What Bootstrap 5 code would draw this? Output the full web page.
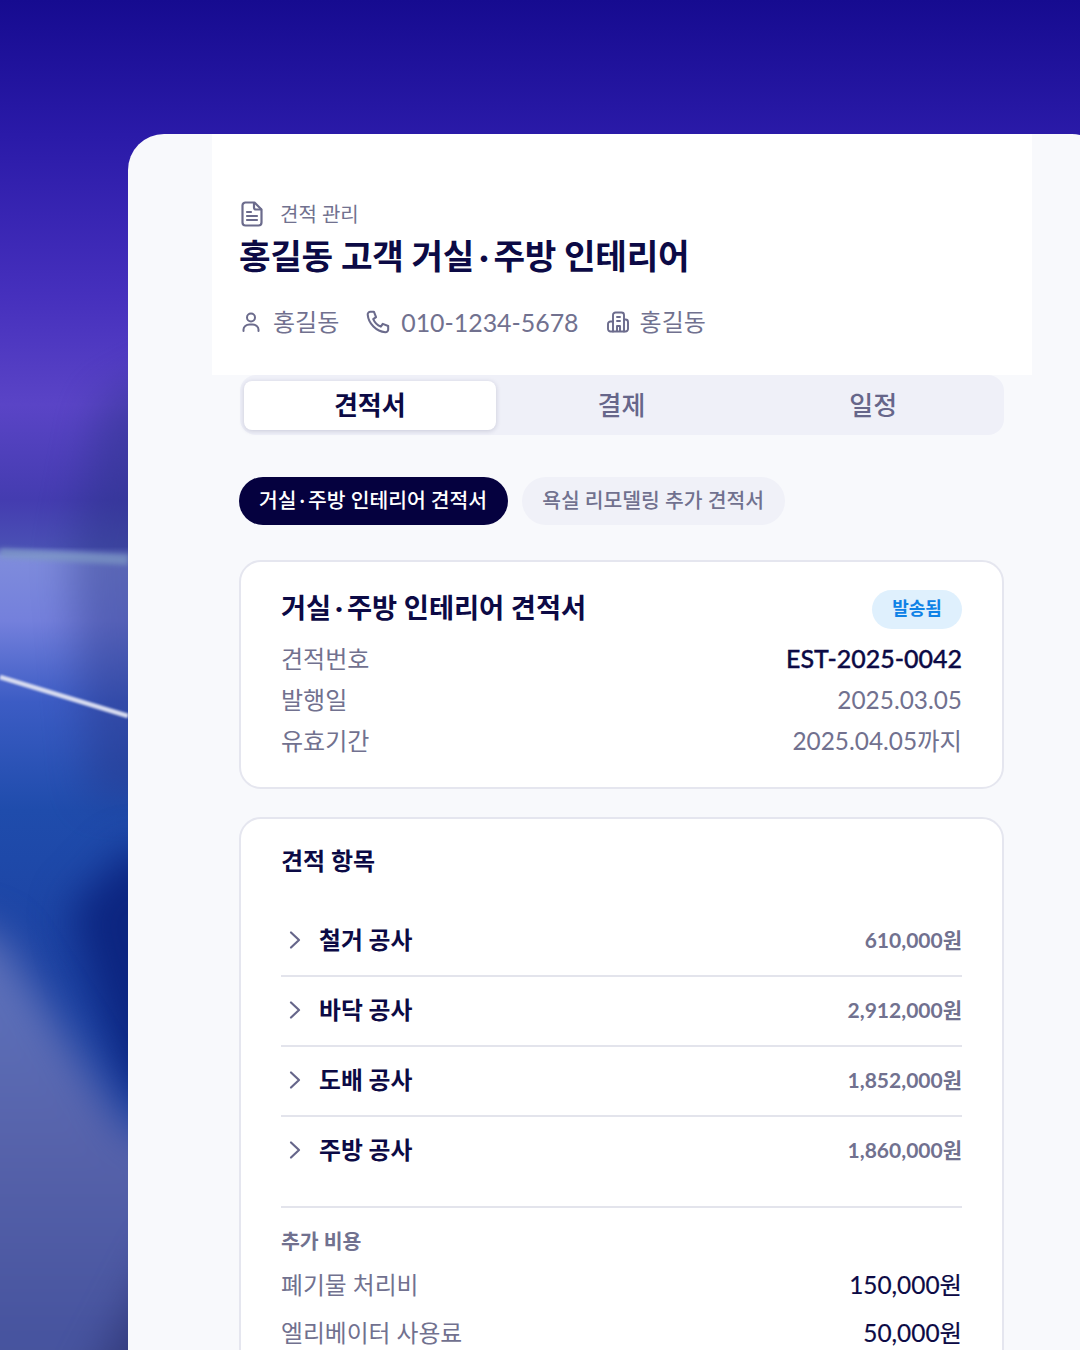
<!DOCTYPE html>
<html lang="ko">
<head>
<meta charset="utf-8">
<title>견적 관리</title>
<link rel="stylesheet" href="https://cdn.jsdelivr.net/npm/bootstrap@5.3.0/dist/css/bootstrap.min.css">
<style>
html,body{margin:0;width:1080px;height:1350px;overflow:hidden}
body{font-family:"Lato","Noto Sans CJK KR",sans-serif;color:#0c0a45;background:#2a1aa8}
.stage{position:relative;width:1080px;height:1350px;overflow:hidden;padding:134px 0 0 128px}
.backdrop{position:absolute;left:0;top:0;width:1080px;height:1350px}
.sheet{position:relative;width:980px;height:1216px;background:#f8f9fc;border-radius:36px 36px 0 0;padding-right:76px;padding-left:84px;overflow:hidden}
.head-panel{background:#fff;height:241px;padding:65px 0 0 27px}
.crumb{font-size:20px;line-height:30px;color:#71718f;gap:17px;padding-left:2px}
.page-title{font-size:34.35px;line-height:44px;font-weight:700;margin:5px 0 0;color:#0c0a45;letter-spacing:-.3px}
.mid{padding:0 .15em}
.meta{margin-top:26px;font-size:24px;line-height:36px;color:#71718f;gap:26px}
.meta span.item{display:flex;align-items:center;gap:10px}
.meta .tel{font-size:24.9px;margin-right:1px}
.body-pad{padding-left:27px;padding-right:28px}
.tabbar{height:60px;background:#eff0f8;border-radius:16px;padding:6px 5px 5px 4px;margin-left:1px}
.tabbtn{flex:1 1 0;border:0;background:transparent;font-size:26px;font-weight:500;color:#66668a;border-radius:8px;line-height:49px;padding:0;text-align:center}
.tabbtn.on{background:#fff;color:#0c0a45;font-weight:600;box-shadow:0 1px 5px rgba(30,30,80,.18)}
.chips{margin-top:42px;gap:14px}
.chip{height:48px;line-height:46px;padding:0 21px 0 20px;border-radius:24px;font-size:20.4px;font-weight:500;background:#f0f1f8;color:#71718f}
.chip.on{background:#05013f;color:#fff}
.panel{background:#fff;border:2px solid #e5e6ef;border-radius:22px;padding:0 40px}
.panel-a{height:229px;margin-top:35px;padding-top:24px}
.panel-b{margin-top:28px;height:600px;padding-top:22px}
.panel-title{font-size:27.3px;line-height:44px;font-weight:700;margin:0;color:#0c0a45}
.sent{height:39px;width:90px;line-height:37px;border-radius:20px;background:#dff0fd;color:#0f82e6;font-size:18px;font-weight:600;text-align:center;margin-top:2px}
.kv-gap{margin-bottom:8px}
.kv{font-size:24px;line-height:41px;color:#71718f}
.kv .num{font-size:24.4px}
.kv .strong{color:#0c0a45;font-weight:500;font-size:25px;-webkit-text-stroke:.35px #0c0a45}
.sec-title{font-size:24px;line-height:40px;font-weight:700;margin:0 0 26px;color:#0c0a45}
.work{height:70px;border-bottom:2px solid #e3e4ec;padding-bottom:2px}
.work.last{border-bottom:0;padding-bottom:4px}
.work .nm{font-size:23.8px;font-weight:700;color:#0c0a45;margin:2px 0 0 17px}
.work .amt{font-size:21px;font-weight:700;color:#71718f}
.chev{margin-left:7px}
.extra{border-top:2px solid #e3e4ec;margin-top:19px;padding-top:14px}
.extra-h{font-size:20.5px;line-height:38px;font-weight:700;color:#71718f;margin-bottom:1px}
.extra-row{font-size:23.8px;line-height:48px;color:#71718f}
.extra-row .val{color:#0c0a45;font-size:24.4px;-webkit-text-stroke:.2px #0c0a45}
</style>
</head>
<body>
<div class="stage">
<svg class="backdrop" viewBox="0 0 1080 1350" aria-hidden="true" color-interpolation-filters="sRGB">
<defs>
<linearGradient id="bg" x1="0" y1="0" x2="0" y2="1">
<stop offset="0" stop-color="#160b90"/>
<stop offset=".1" stop-color="#2a1aa8"/>
<stop offset=".22" stop-color="#4630bd"/>
<stop offset=".3" stop-color="#5a44c6"/>
<stop offset=".37" stop-color="#443cb0"/>
<stop offset=".405" stop-color="#4a50b4"/>
<stop offset=".412" stop-color="#7f8cdc"/>
<stop offset=".46" stop-color="#7480dc"/>
<stop offset=".52" stop-color="#3c5cc4"/>
<stop offset=".6" stop-color="#1f4cac"/>
<stop offset=".72" stop-color="#1c42a2"/>
<stop offset="1" stop-color="#1c42a2"/>
</linearGradient>
<linearGradient id="lite" gradientUnits="userSpaceOnUse" x1="0" y1="1000" x2="0" y2="1350">
<stop offset="0" stop-color="#5c6fb8"/>
<stop offset=".4" stop-color="#5763ab"/>
<stop offset="1" stop-color="#46539e"/>
</linearGradient>
<filter id="soft" x="-60%" y="-40%" width="220%" height="180%"><feGaussianBlur stdDeviation="20"/></filter>
<filter id="soft2"><feGaussianBlur stdDeviation=".9"/></filter>
<filter id="soft3" x="-10%" y="-300%" width="120%" height="700%"><feGaussianBlur stdDeviation="2.5"/></filter>
</defs>
<rect width="1080" height="1350" fill="url(#bg)"/>
<path d="M180 360 L180 800 L90 800 L70 560 L100 400Z" fill="#25307e" opacity=".4" filter="url(#soft)"/>
<path d="M70 910 L128 850 L170 850 L170 1095 L128 1095Z" fill="#0c2580" filter="url(#soft)"/>
<path d="M-60 915 L0 935 L128 1130 L170 1140 L170 1420 L-60 1420Z" fill="url(#lite)" filter="url(#soft)"/>
<path d="M170 1230 L170 1400 L80 1400Z" fill="#2c3270" filter="url(#soft)" opacity=".7"/>
<path d="M0 553 L128 560" stroke="#7d98c4" stroke-width="10" opacity=".7" filter="url(#soft3)"/>
<path d="M0 677 L128 716" stroke="#d8dcf0" stroke-width="4.5" filter="url(#soft2)"/>
</svg>
<main class="sheet">
<header class="head-panel">
<div class="crumb d-flex align-items-center">
<svg width="22" height="26" viewBox="0 0 22 26" fill="none" stroke="#6b6b8c" stroke-width="2.2" stroke-linecap="round" stroke-linejoin="round"><path d="M4 1.500h9.500L20.500 8.500V21.500a3 3 0 0 1-3 3H4.500a3 3 0 0 1-3-3V4.500a3 3 0 0 1 3-3Z"/><path d="M13 2v4.500a2 2 0 0 0 2 2h5"/><path d="M6 11h4M6 15h10M6 19h10"/></svg>
<span>견적 관리</span>
</div>
<h1 class="page-title">홍길동 고객 거실<span class="mid">·</span>주방 인테리어</h1>
<div class="meta d-flex align-items-center">
<span class="item"><svg width="24" height="24" viewBox="0 0 24 24" fill="none" stroke="#6b6b8c" stroke-width="2" stroke-linecap="round"><circle cx="12" cy="7.500" r="4"/><path d="M4.500 21v-1.500a6 5 0 0 1 6-5h3a6 5 0 0 1 6 5V21"/></svg>홍길동</span>
<span class="item tel"><svg width="26" height="26" viewBox="0 0 24 24" fill="none" stroke="#6b6b8c" stroke-width="1.9" stroke-linejoin="round"><path d="M5 2.500h3.200l2 5-2.600 1.800a13 13 0 0 0 7 7l1.800-2.600 5 2v3.200a2.500 2.500 0 0 1-2.700 2.500C10.500 20.800 3.200 13.500 2.500 5.200A2.500 2.500 0 0 1 5 2.500Z"/></svg>010-1234-5678</span>
<span class="item"><svg width="24" height="24" viewBox="0 0 24 24" fill="none" stroke="#6b6b8c" stroke-width="1.9" stroke-linecap="round" stroke-linejoin="round"><path d="M7 21.500V5a2.500 2.500 0 0 1 2.500-2.500h6A2.500 2.500 0 0 1 18 5v16.500"/><path d="M18 9.500h1.500A2.500 2.500 0 0 1 22 12v7a2.500 2.500 0 0 1-2.500 2.500h-15A2.500 2.500 0 0 1 2 19v-5a2.500 2.500 0 0 1 2.500-2.500H7"/><path d="M11 7h3M11 11h3M11 21v-5h3v5"/></svg>홍길동</span>
</div>
</header>
<div class="body-pad">
<div class="tabbar d-flex" role="tablist">
<button class="tabbtn on" type="button">견적서</button>
<button class="tabbtn" type="button">결제</button>
<button class="tabbtn" type="button">일정</button>
</div>
<div class="chips d-flex">
<span class="chip on">거실<span class="mid">·</span>주방 인테리어 견적서</span>
<span class="chip">욕실 리모델링 추가 견적서</span>
</div>
<section class="panel panel-a">
<div class="d-flex justify-content-between align-items-center kv-gap">
<h2 class="panel-title">거실<span class="mid">·</span>주방 인테리어 견적서</h2>
<span class="sent">발송됨</span>
</div>
<div class="kv d-flex justify-content-between"><span>견적번호</span><span class="strong">EST-2025-0042</span></div>
<div class="kv d-flex justify-content-between"><span>발행일</span><span class="num">2025.03.05</span></div>
<div class="kv d-flex justify-content-between"><span>유효기간</span><span class="num">2025.04.05까지</span></div>
</section>
<section class="panel panel-b">
<h3 class="sec-title">견적 항목</h3>
<div class="work d-flex align-items-center justify-content-between"><span class="d-flex align-items-center"><svg class="chev" width="14" height="20" viewBox="0 0 14 20" fill="none" stroke="#66668a" stroke-width="2.2" stroke-linecap="round" stroke-linejoin="round"><path d="M3 2.500l8 7.500-8 7.500"/></svg><span class="nm">철거 공사</span></span><span class="amt">610,000원</span></div>
<div class="work d-flex align-items-center justify-content-between"><span class="d-flex align-items-center"><svg class="chev" width="14" height="20" viewBox="0 0 14 20" fill="none" stroke="#66668a" stroke-width="2.2" stroke-linecap="round" stroke-linejoin="round"><path d="M3 2.500l8 7.500-8 7.500"/></svg><span class="nm">바닥 공사</span></span><span class="amt">2,912,000원</span></div>
<div class="work d-flex align-items-center justify-content-between"><span class="d-flex align-items-center"><svg class="chev" width="14" height="20" viewBox="0 0 14 20" fill="none" stroke="#66668a" stroke-width="2.2" stroke-linecap="round" stroke-linejoin="round"><path d="M3 2.500l8 7.500-8 7.500"/></svg><span class="nm">도배 공사</span></span><span class="amt">1,852,000원</span></div>
<div class="work last d-flex align-items-center justify-content-between"><span class="d-flex align-items-center"><svg class="chev" width="14" height="20" viewBox="0 0 14 20" fill="none" stroke="#66668a" stroke-width="2.2" stroke-linecap="round" stroke-linejoin="round"><path d="M3 2.500l8 7.500-8 7.500"/></svg><span class="nm">주방 공사</span></span><span class="amt">1,860,000원</span></div>
<div class="extra">
<div class="extra-h">추가 비용</div>
<div class="extra-row d-flex justify-content-between"><span>폐기물 처리비</span><span class="val">150,000원</span></div>
<div class="extra-row d-flex justify-content-between"><span>엘리베이터 사용료</span><span class="val">50,000원</span></div>
</div>
</section>
</div>
</main>
</div>
<script src="https://cdn.jsdelivr.net/npm/bootstrap@5.3.0/dist/js/bootstrap.bundle.min.js"></script>
</body>
</html>
